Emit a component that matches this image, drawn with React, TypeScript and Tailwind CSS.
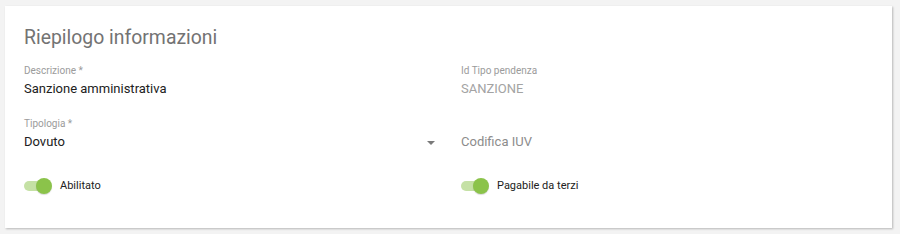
import React from "react";

function Toggle({ label }: { label: string }) {
  return (
    <div className="flex items-center h-[30px]">
      <div className="relative w-[28px] h-[16px] flex items-center">
        <div className="w-[26px] h-[10px] rounded-full bg-[#c5e1a5]" />
        <div className="absolute right-0 top-0 w-[16px] h-[16px] rounded-full bg-[#8bc34a] shadow-[0_1px_1px_rgba(0,0,0,0.15)]" />
      </div>
      <span className="ml-[8px] text-[11px] leading-[14px] text-[#212121]">{label}</span>
    </div>
  );
}

export default function App() {
  return (
    <div
      className="w-[900px] h-[234px] bg-[#f3f3f3] pt-[6px] pl-[5px] pr-[8px]"
      style={{ fontFamily: "Roboto, 'Liberation Sans', sans-serif" }}
    >
      <div className="bg-white h-[222px] shadow-[1px_1px_2px_rgba(0,0,0,0.25)] pl-[19px] pr-[14px] pt-[20px]">
        <h2 className="text-[19.4px] leading-[24px] text-[#737373] font-normal">Riepilogo informazioni</h2>
        <div className="grid grid-cols-2 gap-x-[20px] mt-[15px]">
          <div className="h-[53px]">
            <div className="text-[10px] leading-[12px] text-[#9b9b9b]">Descrizione *</div>
            <div className="mt-[4px] text-[13px] leading-[16px] text-[#212121]">Sanzione amministrativa</div>
          </div>
          <div className="h-[53px]">
            <div className="text-[10px] leading-[12px] text-[#9b9b9b]">Id Tipo pendenza</div>
            <div className="mt-[4px] text-[13px] leading-[16px] text-[#a3a3a3]">SANZIONE</div>
          </div>
          <div className="h-[53px]">
            <div className="text-[10px] leading-[12px] text-[#9b9b9b]">Tipologia *</div>
            <div className="mt-[4px] flex items-center justify-between pr-[6px]">
              <span className="text-[13px] leading-[16px] text-[#212121]">Dovuto</span>
              <svg width="8" height="4" viewBox="0 0 8 4" className="mt-[1px]">
                <path d="M0 0 L8 0 L4 4 Z" fill="#7a7a7a" />
              </svg>
            </div>
          </div>
          <div className="h-[53px] pt-[16px]">
            <div className="text-[13px] leading-[16px] text-[#8c8c8c]">Codifica IUV</div>
          </div>
          <Toggle label="Abilitato" />
          <Toggle label="Pagabile da terzi" />
        </div>
      </div>
    </div>
  );
}
